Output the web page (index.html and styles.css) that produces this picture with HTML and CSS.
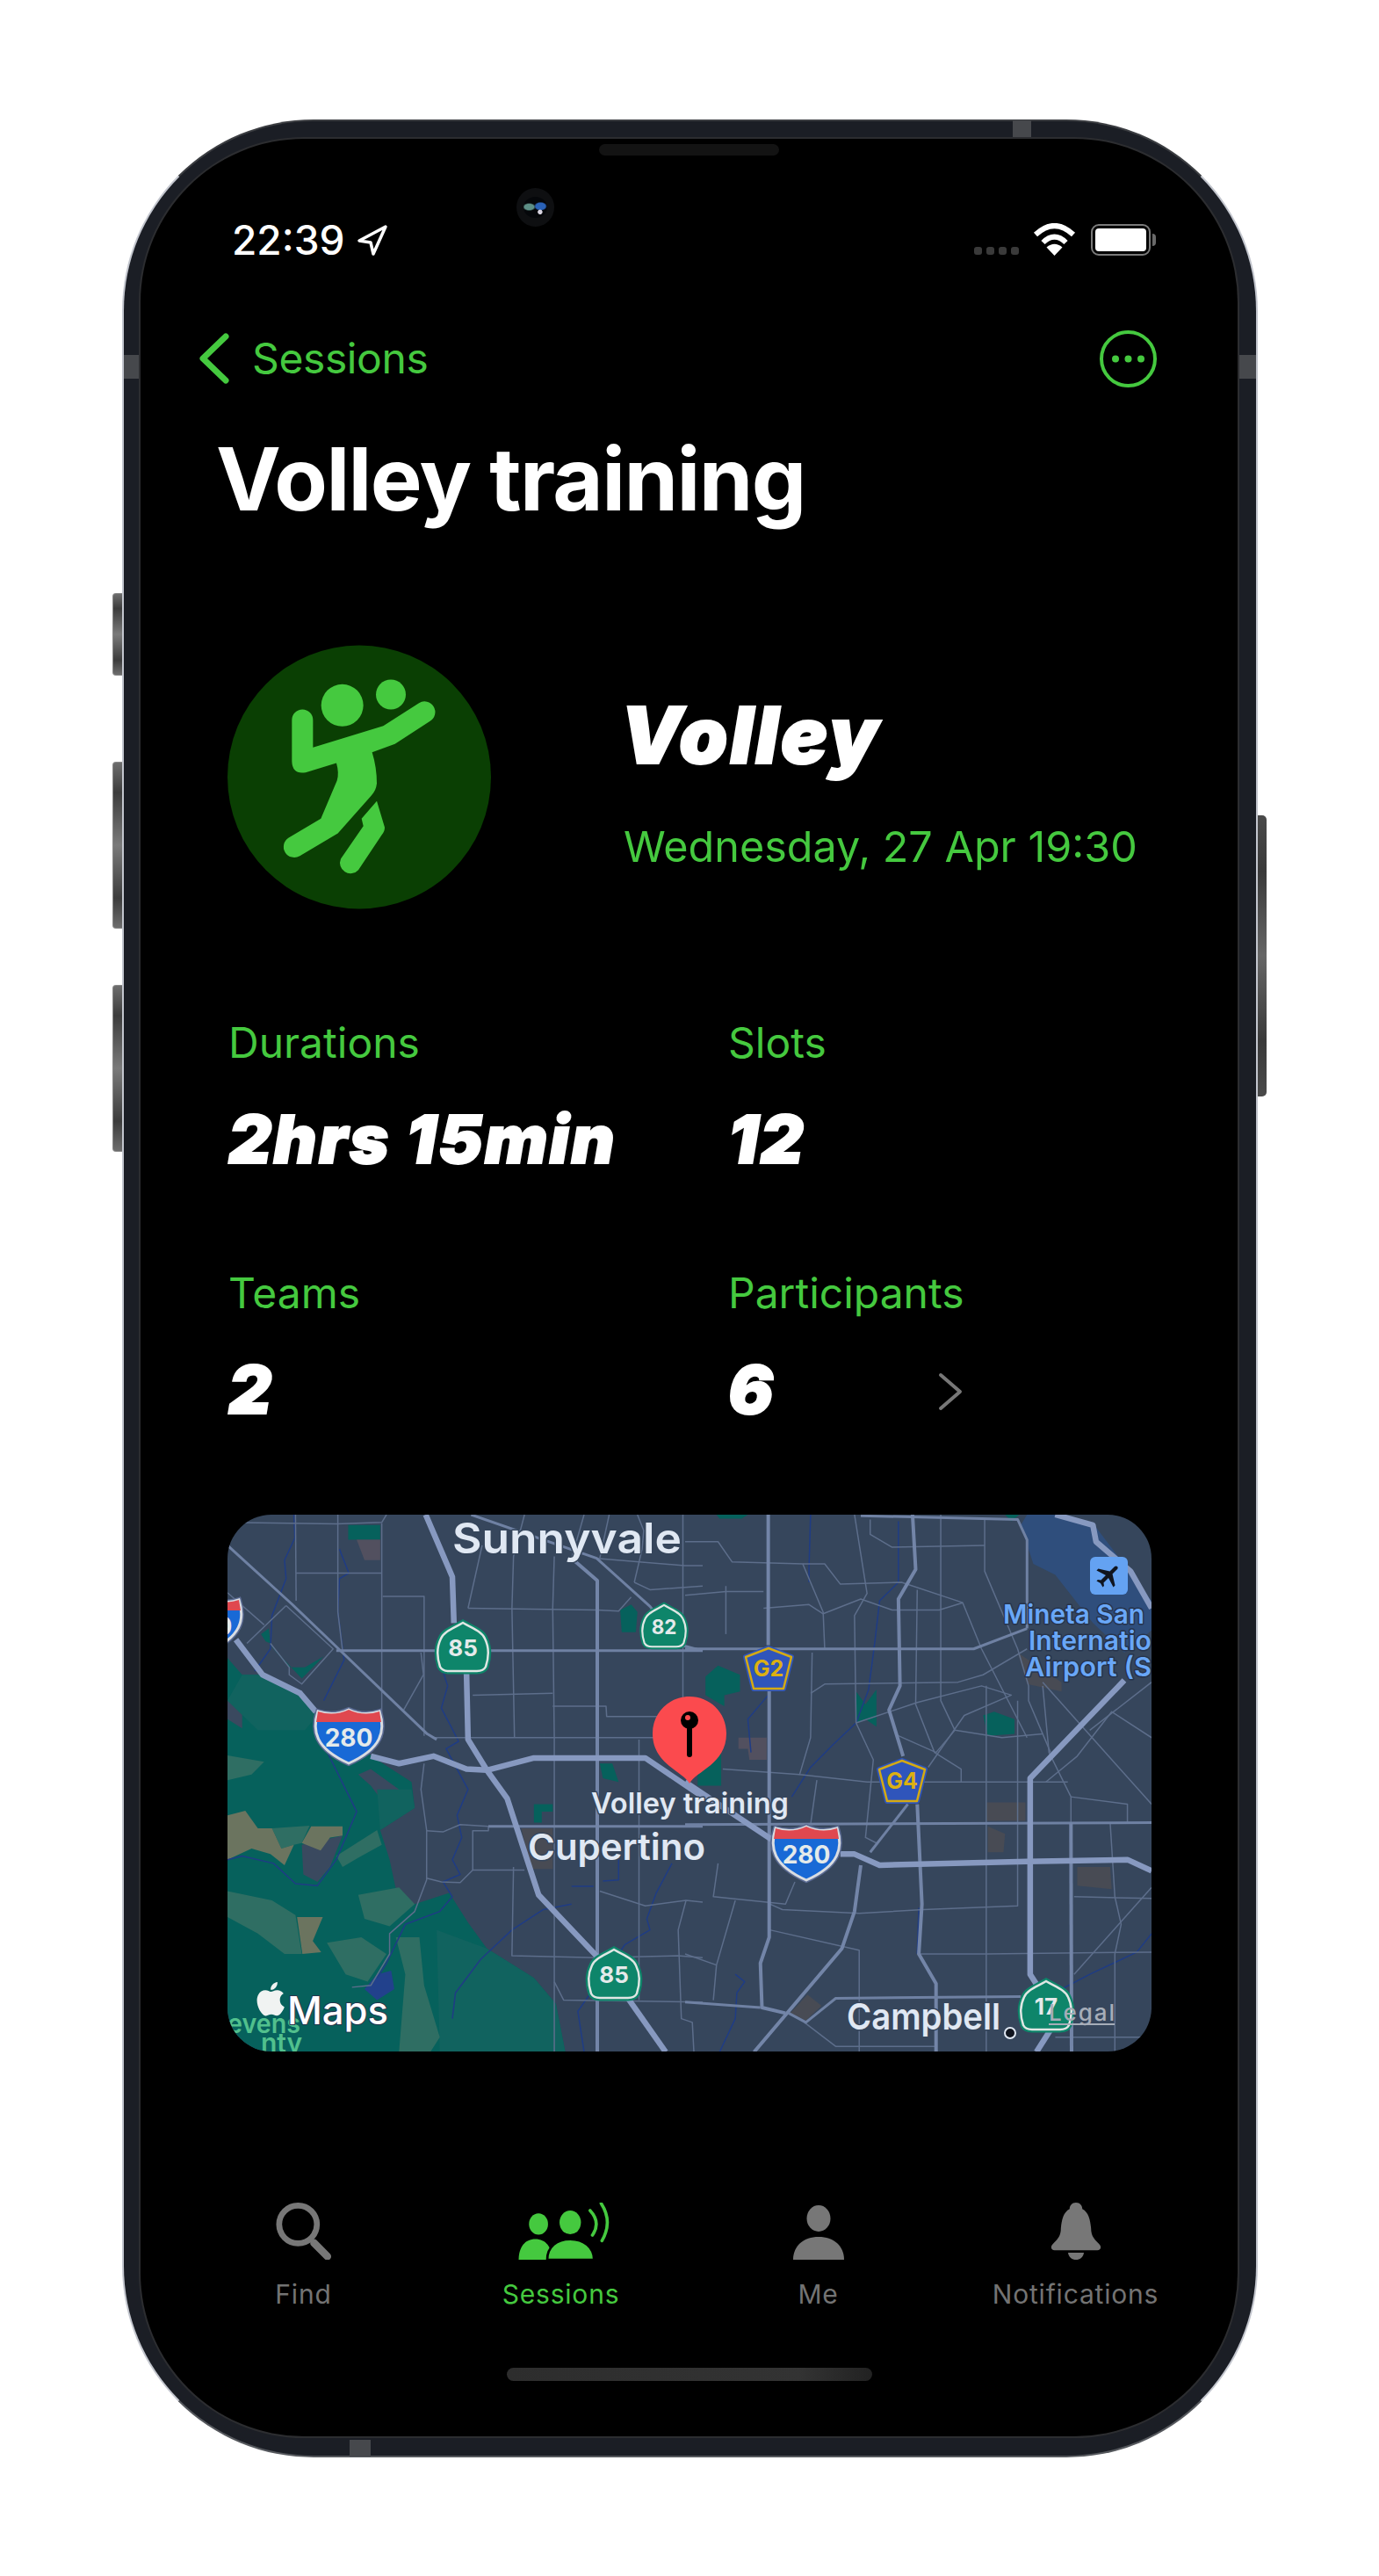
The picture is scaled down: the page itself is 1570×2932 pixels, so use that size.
FILE: index.html
```html
<!DOCTYPE html>
<html lang="en">
<head>
  <meta charset="UTF-8">
  <meta name="viewport" content="width=device-width, initial-scale=1.0">
  <title>Volley training</title>
  <link rel="stylesheet" href="styles.css">
</head>
<body>
  <div class="device">
    <span class="side-btn btn-silent"></span>
    <span class="side-btn btn-up"></span>
    <span class="side-btn btn-down"></span>
    <span class="side-btn btn-power"></span>
    <span class="band band-top"></span>
    <span class="band band-left"></span>
    <span class="band band-right"></span>
    <span class="band band-bottom"></span>

    <div class="screen">
      <span class="speaker"></span>
      <span class="camera"><span class="lens"></span></span>

      <div class="status-bar">
        <div class="status-left">
          <span class="time">22:39</span>
          <svg class="loc-arrow" viewBox="0 0 36 37"><path d="M33 3 L3 19 L16 21 L19 34 Z"/></svg>
        </div>
        <div class="status-right">
          <span class="signal"><i></i><i></i><i></i><i></i></span>
          <svg class="wifi" viewBox="0 0 49 37">
            <path d="M3 13 Q24.500 -7 46 13" />
            <path d="M11.500 22 Q24.500 9 37.500 22" />
            <path class="wifi-tip" d="M24.500 37 L15.500 27.500 Q24.500 20 33.500 27.500 Z"/>
          </svg>
          <span class="battery"><span class="battery-fill"></span></span>
          <span class="battery-nib"></span>
        </div>
      </div>

      <div class="nav">
        <a class="back">
          <svg class="chevron" viewBox="0 0 34 58"><path d="M30 4 L4 29 L30 54"/></svg>
          <span>Sessions</span>
        </a>
        <svg class="more" viewBox="0 0 65 65">
          <circle class="more-ring" cx="32.500" cy="32.500" r="30.500"/>
          <circle cx="18" cy="32.500" r="4"/><circle cx="32.500" cy="32.500" r="4"/><circle cx="47" cy="32.500" r="4"/>
        </svg>
      </div>

      <h1 class="title">Volley training</h1>

      <div class="hero">
        <svg class="sport-icon" viewBox="118 102 900 902">
          <circle class="sport-bg" cx="568" cy="553" r="450"/>
          <circle cx="510" cy="308" r="72"/>
          <circle cx="676" cy="271" r="51"/>
          <path d="M338 358 a36 36 0 0 1 72 0 L410 452 L650 378 L772 300 a36 36 0 0 1 38 62 L690 440 L612 468 Q628 520 628 575 Q625 600 610 615 L495 745 L365 822 a36 36 0 0 1 -38 -62 L437 695 L492 565 Q500 540 490 505 L385 537 Q340 545 338 500 Z"/>
          <path d="M628 635 L655 725 Q655 740 645 750 L565 870 a36 36 0 0 1 -60 -38 L582 720 L576 695 Z"/>
        </svg>
        <div class="hero-text">
          <div class="sport-name">Volley</div>
          <div class="session-date">Wednesday, 27 Apr 19:30</div>
        </div>
      </div>

      <div class="stats">
        <div class="stat">
          <div class="stat-label">Durations</div>
          <div class="stat-value">2hrs 15min</div>
        </div>
        <div class="stat">
          <div class="stat-label">Slots</div>
          <div class="stat-value">12</div>
        </div>
        <div class="stat">
          <div class="stat-label">Teams</div>
          <div class="stat-value">2</div>
        </div>
        <div class="stat">
          <div class="stat-label">Participants</div>
          <div class="stat-row">
            <div class="stat-value">6</div>
            <svg class="disclosure" viewBox="0 0 28 44"><path d="M3 3 L25 22 L3 41"/></svg>
          </div>
        </div>
      </div>

      <div class="map">
        <svg class="map-svg" viewBox="0 0 1052 611">
          <defs>
            <path id="ca-shield" d="M0 -28 C10 -22 22 -18 25 -10 C30 0 30 10 26 22 C24 26 20 27 16 27 L-16 27 C-20 27 -24 26 -26 22 C-30 10 -30 0 -25 -10 C-22 -18 -10 -22 0 -28 Z"/>
            <path id="us-shield" d="M-35 -28 Q-17 -22 0 -30 Q17 -22 35 -28 C42 -6 38 14 0 31 C-38 14 -42 -6 -35 -28 Z"/>
            <path id="us-band" d="M-35 -28 Q-17 -22 0 -30 Q17 -22 35 -28 L37 -16 L-37 -16 Z"/>
            <path id="county" d="M0 -23 L26 -13 L17 23 L-17 23 L-26 -13 Z"/>
          </defs>

          <!-- land patches, left half, traced in crop coords -->
          <g transform="translate(-19 -24) scale(0.35714 0.42088)">
            <path class="green" d="M53 445 L100 490 L170 490 L290 535 L340 600 L530 720 L640 780 L650 850 L540 910 L570 990 L590 1070 L650 1110 L760 1080 L820 1160 L880 1230 L1030 1310 L1100 1380 L1130 1510 L53 1510 Z"/>
            <path class="land" d="M53 560 L100 545 L100 635 L53 610 Z M105 570 L185 545 L240 570 L180 610 L130 600 Z M470 760 L510 745 L600 800 L545 830 L510 790 Z M290 950 L420 925 L380 1010 L340 1050 L295 1030 Z"/>
            <path class="green-dim" d="M100 490 L170 490 L290 535 L340 600 L300 640 L150 640 L53 560 Z M530 800 L640 800 L650 850 L540 910 Z M720 1180 L880 1230 L1030 1310 L1100 1380 L1130 1510 L730 1510 Z"/>
            <path class="green-light" d="M53 1075 L195 1100 L270 1140 L290 1245 L235 1245 L150 1190 L53 1145 Z M53 708 L170 725 L130 760 L53 775 Z M470 1085 L600 1065 L650 1110 L570 1170 L490 1150 Z M370 1215 L480 1200 L560 1245 L500 1320 L430 1300 Z M590 1200 L665 1200 L680 1330 L730 1470 L700 1510 L600 1510 L620 1300 Z M195 905 L315 898 L290 945 L265 950 L225 960 Z M400 980 L530 910 L545 950 L470 985 L420 1010 Z"/>
            <path class="tan" d="M53 870 L110 858 L150 905 L195 905 L225 960 L265 950 L235 1005 L190 975 L130 960 L53 990 Z M290 945 L320 900 L420 900 L420 925 L380 930 L350 965 Z M275 1145 L357 1145 L325 1210 L352 1240 L292 1245 Z"/>
            <path class="green" d="M185 405 L290 500 L360 440 L300 470 L250 470 Z M438 85 L540 85 L540 125 L465 125 L438 125 Z M1305 315 L1340 300 L1360 320 L1355 375 L1310 375 Z M1240 730 L1280 730 L1300 780 L1250 770 Z M1030 840 L1090 840 L1090 860 L1055 860 L1055 890 L1030 890 Z M160 380 L185 365 L190 405 L175 400 Z"/>
            <path class="maroon" d="M465 125 L540 125 L540 180 L490 180 Z"/>
            <path class="brown" d="M990 905 L1090 905 L1090 1015 L1020 1015 Z"/>
            <path class="reservoir" d="M530 1300 L575 1290 L585 1340 L530 1370 L490 1340 Z"/>

            <polyline class="water" points="265,57 268,120 235,180 240,230 195,330 190,420 140,480"/>
            <polyline class="water" points="410,150 440,215 410,230 405,320 425,450 360,560"/>
            <polyline class="water" points="360,680 465,860 400,990 340,1060 270,1055 200,1000 100,980 53,990"/>
            <polyline class="water" points="740,480 755,520 735,580 790,670 750,690 820,800 785,870 800,930 770,990 795,1030 740,1050 770,1090 730,1130 620,1165 560,1270 530,1310"/>
            <polyline class="water" points="1150,1062 1220,1062"/>
            <polyline class="water" points="1250,1048 1300,1045 1300,985"/>
            <polyline class="water" points="1470,1000 1420,1080 1390,1150 1400,1180 1320,1220 1170,1400 1190,1510"/>
            <polyline class="water" points="770,1420 780,1350 860,1260 960,1180 1060,1125 1150,1110"/>

            <polyline class="minor" points="53,78 400,82 545,78 560,57"/>
            <polyline class="minor" points="270,57 272,290"/>
            <polyline class="minor" points="405,57 405,320 420,425"/>
            <polyline class="minor" points="545,80 545,660"/>
            <polyline class="minor" points="272,215 405,215 545,215"/>
            <polyline class="minor" points="548,278 680,278 680,655"/>
            <polyline class="minor" points="670,430 678,490 615,585"/>
            <polyline class="minor" points="240,303 115,405"/>
            <polyline class="minor" points="240,303 390,420 290,515 250,490 250,470 190,405"/>
            <polyline class="minor" points="53,268 170,355"/>
            <polyline class="minor" points="835,545 1090,540"/>
            <polyline class="minor" points="820,310 1232,315 1300,318 1340,280"/>
            <polyline class="minor" points="1000,57 965,170 960,310 968,660"/>
            <polyline class="minor" points="1190,57 1150,175"/>
            <polyline class="minor" points="1270,57 1240,175"/>
            <polyline class="minor" points="1095,170 1090,310 1095,660 1095,1510"/>
            <polyline class="minor" points="820,310 865,140"/>
            <polyline class="minor" points="1090,575 1260,575 1262,603 1568,603"/>
            <polyline class="minor" points="705,660 1568,660"/>
            <polyline class="minor" points="680,730 670,800 688,910 688,1045 650,1130 570,1190 570,1245 510,1330 450,1335"/>
            <polyline class="minor" points="688,912 740,915 795,895 885,900 885,912 835,912 835,1018 1000,1018"/>
            <polyline class="minor" points="688,1040 735,1050 795,1052 835,1018"/>
            <polyline class="minor" points="965,1010 960,1250 1230,1255 1490,1250 1568,1255"/>
            <polyline class="minor" points="1240,1075 1385,1115 1515,1100 1568,1105"/>
            <polyline class="minor" points="1365,665 1365,1370"/>
            <polyline class="minor" points="1515,1100 1490,1180 1500,1420 1535,1430 1540,1510"/>
            <polyline class="minor" points="1095,1320 1125,1370 1568,1375"/>
            <polyline class="minor" points="1350,240 1400,260 1568,250"/>
            <polyline class="minor" points="1350,240 1375,150 1380,100 1360,57"/>
            <polyline class="minor" points="1505,57 1505,660"/>
            <polyline class="minor" points="1230,175 1510,195 1568,195"/>
            <polyline class="medium" points="53,140 260,300 690,650 720,665"/>
            <polyline class="medium" points="400,425 1568,425"/>
            <polyline class="medium" points="885,900 1568,900"/>
            <polyline class="medium" points="830,57 1230,175 1400,305 1500,410 1568,425"/>
            <polyline class="medium wide" points="1150,175 1232,235 1232,1510"/>
            <polyline class="major" points="80,395 165,490 285,540 335,590"/>
            <polyline class="major" points="510,710 600,730 710,710 815,745 880,748 1030,715 1385,715 1568,820"/>
            <polyline class="major" points="685,57 770,225 775,350"/>
            <polyline class="major" points="815,480 820,665 880,748 945,825 1045,1085 1235,1255"/>
            <polyline class="major" points="1330,1365 1450,1510"/>
          </g>

          <!-- land patches, right half -->
          <g transform="translate(521 -24) scale(0.35714 0.42088)">
            <path class="airport" d="M1070 85 L1090 57 L1200 57 L1300 80 L1487 290 L1487 370 L1400 430 L1300 350 L1180 220 L1110 190 Z"/>
            <path class="green" d="M65 495 L105 465 L175 490 L175 535 L125 545 L125 575 L65 545 Z M545 535 L575 570 L610 530 L610 630 L575 610 L545 620 Z M950 600 L985 590 L1050 610 L1050 650 L965 655 Z M40 700 L115 700 L115 790 L40 790 Z M100 57 L200 57 L180 68 L110 68 Z M1020 57 L1065 57 L1040 75 Z"/>
            <path class="maroon" d="M170 660 L260 660 L260 720 L205 720 L200 690 L170 690 Z"/>
            <path class="brown" d="M960 835 L1085 835 L1085 885 L960 885 Z M965 900 L1020 920 L1015 970 L965 970 Z M1250 1010 L1355 1010 L1360 1070 L1250 1060 Z M335 1405 L390 1355 L435 1385 L385 1425 Z M1060 430 L1200 510 L1200 535 L1090 515 Z"/>

            <polyline class="water" points="400,57 395,200 395,240"/>
            <polyline class="water" points="680,75 680,240 620,290 605,400 585,530 545,620 470,680 400,740 340,820"/>
            <polyline class="water" points="210,700 200,610 265,545"/>
            <polyline class="water" points="745,1120 740,1245"/>
            <polyline class="water" points="160,1300 190,1320 165,1350 160,1420 110,1510"/>
            <polyline class="water" points="1200,1340 1290,1300 1440,1240 1487,1190"/>

            <polyline class="minor" points="0,130 105,130 150,185 375,190 440,320 445,420"/>
            <polyline class="minor" points="375,190 445,190 495,245 690,240 885,295 945,420 1090,660"/>
            <polyline class="minor" points="0,275 130,265 250,265"/>
            <polyline class="minor" points="130,250 130,380"/>
            <polyline class="minor" points="250,310 395,300 440,325 560,285 660,315 810,315 885,295"/>
            <polyline class="minor" points="540,57 580,270 540,330 545,620 600,720 575,930 610,945"/>
            <polyline class="minor" points="590,70 590,110 660,145 955,140"/>
            <polyline class="minor" points="815,57 815,560 860,640 1010,660 1140,650"/>
            <polyline class="minor" points="955,70 955,210 1060,420 1095,520 1095,560 1165,700"/>
            <polyline class="minor" points="740,260 735,570 795,700 880,745 880,780"/>
            <polyline class="minor" points="405,430 400,660 365,760 580,780 880,780 1220,780"/>
            <polyline class="minor" points="400,540 445,515 870,510 950,490 1090,420"/>
            <polyline class="minor" points="120,745 365,760"/>
            <polyline class="minor" points="420,775 400,895"/>
            <polyline class="minor" points="545,620 740,565 945,520 1040,545 890,600 775,740"/>
            <polyline class="minor" points="860,640 800,700 680,655"/>
            <polyline class="minor" points="960,520 960,1510"/>
            <polyline class="minor" points="1060,560 1060,1115 760,1125 555,1135 310,1125 270,1110"/>
            <polyline class="minor" points="105,1000 90,1090 320,1110 350,1050"/>
            <polyline class="minor" points="1140,520 1160,700 1230,820 1230,890"/>
            <polyline class="minor" points="1230,820 1410,840 1410,890"/>
            <polyline class="minor" points="1487,660 1360,590 1250,710 1150,780"/>
            <polyline class="minor" points="1140,510 1487,840"/>
            <polyline class="minor" points="1290,640 1487,510"/>
            <polyline class="minor" points="160,1100 100,1275 90,1370"/>
            <polyline class="minor" points="0,1245 100,1275"/>
            <polyline class="minor" points="270,1180 555,1235 555,1510"/>
            <polyline class="minor" points="745,1245 960,1245"/>
            <polyline class="minor" points="960,1245 1487,1240"/>
            <polyline class="minor" points="1240,1090 1487,1095"/>
            <polyline class="minor" points="1355,890 1370,1090 1390,1165 1370,1245 1370,1510"/>
            <polyline class="minor" points="1240,1300 1487,1065"/>
            <polyline class="minor" points="380,1430 480,1495 800,1495"/>
            <polyline class="minor" points="1180,1470 1487,1470"/>
            <polyline class="medium" points="0,420 920,420 1090,365"/>
            <polyline class="medium" points="560,60 1060,70 1090,125 1090,365"/>
            <polyline class="medium" points="0,895 1487,890"/>
            <polyline class="medium wide" points="1230,890 1232,1510"/>
            <polyline class="medium" points="590,970 710,840"/>
            <polyline class="medium wide" points="725,57 735,205 680,285 685,520 650,585 695,710"/>
            <polyline class="medium wide" points="740,840 755,1110 745,1245 800,1325 800,1510"/>
            <polyline class="medium wide" points="265,57 265,410"/>
            <polyline class="medium wide" points="268,530 268,1200 240,1270 245,1390 320,1405"/>
            <polyline class="medium wide" points="560,1005 540,1130 500,1230 330,1400 220,1510"/>
            <polyline class="medium" points="0,1375 240,1390"/>
            <polyline class="medium" points="330,1405 385,1430 480,1365 1070,1360"/>
            <polyline class="major" points="0,780 275,935"/>
            <polyline class="major" points="495,975 540,975 620,1005 1090,995 1410,990 1487,1020"/>
            <polyline class="major" points="1400,505 1100,770 1100,1300 1130,1340"/>
            <polyline class="major" points="1165,1450 1120,1510"/>
            <polyline class="major" points="1180,57 1300,85 1310,130 1420,210 1487,310"/>
          </g>

          <text class="map-label" x="256" y="44" textLength="261" lengthAdjust="spacingAndGlyphs">Sunnyvale</text>
          <text class="map-label map-small" x="414" y="340" textLength="225" lengthAdjust="spacingAndGlyphs">Volley training</text>
          <text class="map-label map-mid" x="342" y="393" textLength="202" lengthAdjust="spacingAndGlyphs">Cupertino</text>
          <text class="map-label map-mid" x="705" y="586" textLength="175" lengthAdjust="spacingAndGlyphs">Campbell</text>
          <text class="airport-label" x="883" y="124" textLength="161" lengthAdjust="spacingAndGlyphs">Mineta San</text>
          <text class="airport-label" x="912" y="154" textLength="140" lengthAdjust="spacingAndGlyphs">Internatio</text>
          <text class="airport-label" x="908" y="184" textLength="144" lengthAdjust="spacingAndGlyphs">Airport (S</text>
          <text class="park-label" x="0" y="590" textLength="83" lengthAdjust="spacingAndGlyphs">evens</text>
          <text class="park-label" x="38" y="612">nty</text>

          <g transform="translate(268 151)">
            <use class="shield-back" href="#ca-shield"/><use class="shield-out" href="#ca-shield"/><text class="shield-num" y="10">85</text>
          </g>
          <g transform="translate(497 127) scale(0.86)">
            <use class="shield-back" href="#ca-shield"/><use class="shield-out" href="#ca-shield"/><text class="shield-num" y="10">82</text>
          </g>
          <g transform="translate(440 523)">
            <use class="shield-back" href="#ca-shield"/><use class="shield-out" href="#ca-shield"/><text class="shield-num" y="10">85</text>
          </g>
          <g transform="translate(932 559)">
            <use class="shield-back" href="#ca-shield"/><use class="shield-out" href="#ca-shield"/><text class="shield-num" y="10">17</text>
          </g>
          <g transform="translate(-22 125)">
            <use class="us-back" href="#us-shield"/><use class="us-out" href="#us-shield"/><use class="us-band" href="#us-band"/><text class="shield-num us-num" y="12">280</text>
          </g>
          <g transform="translate(138 252)">
            <use class="us-back" href="#us-shield"/><use class="us-out" href="#us-shield"/><use class="us-band" href="#us-band"/><text class="shield-num us-num" y="12">280</text>
          </g>
          <g transform="translate(659 385)">
            <use class="us-back" href="#us-shield"/><use class="us-out" href="#us-shield"/><use class="us-band" href="#us-band"/><text class="shield-num us-num" y="12">280</text>
          </g>
          <g transform="translate(616 175)">
            <use class="county-out" href="#county"/><use class="county-in" href="#county"/><text class="shield-num county-num" y="9">G2</text>
          </g>
          <g transform="translate(768 303)">
            <use class="county-out" href="#county"/><use class="county-in" href="#county"/><text class="shield-num county-num" y="9">G4</text>
          </g>

          <rect class="plane-tile" x="982" y="48" width="43" height="43" rx="6"/>
          <path class="plane" transform="translate(986.500 52.500) rotate(45 17 17) scale(1.42)" d="M21 16v-2l-8-5V3.500c0-.83-.67-1.500-1.500-1.500S10 2.670 10 3.500V9l-8 5v2l8-2.500V19l-2 1.500V22l3.500-1 3.500 1v-1.500L13 19v-5.500l8 2.500z"/>

          <path class="pin" d="M526 306 C519 292 484 284 484 249 C484 225 503 207 526 207 C549 207 568 225 568 249 C568 284 533 292 526 306 Z"/>
          <line class="pin-stick" x1="526" y1="236" x2="526" y2="273"/>
          <circle cx="526" cy="234" r="10"/>
          <circle class="pin-spot" cx="524" cy="231" r="3"/>

          <circle class="poi-dot" cx="891" cy="590" r="6"/>

          <path class="apple" transform="translate(30 532) scale(1.6)" d="M12.152 6.896c-.948 0-2.415-1.078-3.960-1.040-2.040.027-3.910 1.183-4.961 3.014-2.117 3.675-.546 9.103 1.519 12.090 1.013 1.454 2.208 3.090 3.792 3.039 1.520-.065 2.090-.987 3.935-.987 1.831 0 2.350.987 3.960.948 1.637-.026 2.676-1.480 3.676-2.948 1.156-1.688 1.636-3.325 1.662-3.415-.039-.013-3.182-1.221-3.220-4.857-.026-3.040 2.480-4.494 2.597-4.559-1.429-2.090-3.623-2.324-4.390-2.376-2-.156-3.675 1.090-4.610 1.090zM15.530 3.830c.843-1.012 1.400-2.427 1.245-3.830-1.207.052-2.662.805-3.532 1.818-.780.896-1.454 2.338-1.273 3.714 1.338.104 2.715-.688 3.559-1.701"/>
          <text class="maps-word" x="68" y="580" textLength="115" lengthAdjust="spacingAndGlyphs">Maps</text>
          <text class="legal" x="935" y="576" textLength="75">Legal</text>
          <line class="legal-line" x1="935" y1="580" x2="1010" y2="580"/>
        </svg>
      </div>

      <div class="tabs">
        <div class="tab">
          <svg class="tab-icon icon-find" viewBox="0 0 66 68">
            <circle cx="26" cy="26" r="22.500"/>
            <path class="find-handle" d="M45 48 L61 64"/>
          </svg>
          <span>Find</span>
        </div>
        <div class="tab tab-active">
          <svg class="tab-icon icon-sessions" viewBox="0 0 114 72">
            <ellipse cx="25" cy="27" rx="12" ry="13.500"/>
            <path d="M0 72 C0 56 8 46 21 46 C34 46 42 56 42 72 Z"/>
            <ellipse cx="65" cy="25" rx="13.500" ry="15"/>
            <path class="body-front" d="M36 72 C36 56 48 46 65 46 C82 46 95 56 95 72 Z"/>
            <path class="wave" d="M90 10 Q104 25 93 41"/>
            <path class="wave" d="M104 1 Q119 24 105 48"/>
          </svg>
          <span>Sessions</span>
        </div>
        <div class="tab">
          <svg class="tab-icon icon-me" viewBox="0 0 58 62">
            <ellipse cx="29" cy="15" rx="13.500" ry="15"/>
            <path d="M0 62 C0 46 12 36 29 36 C46 36 58 46 58 62 Z"/>
          </svg>
          <span>Me</span>
        </div>
        <div class="tab">
          <svg class="tab-icon icon-bell" viewBox="0 0 64 72">
            <path d="M32 0 C37 0 40 4 40 8 C48 12 50 22 51 32 C51 42 55 46 61 52 C65 56 63 60 59 60 L5 60 C1 60 -1 56 3 52 C9 46 13 42 13 32 C14 22 16 12 24 8 C24 4 27 0 32 0 Z"/>
            <path d="M22 63 L42 63 C41 69 37 72 32 72 C27 72 23 69 22 63 Z"/>
          </svg>
          <span>Notifications</span>
        </div>
      </div>

      <div class="home-bar"></div>
    </div>
  </div>
</body>
</html>
```

FILE: styles.css
```css
* {
  box-sizing: border-box;
}
body {
  margin: 0;
  padding: 136px 0 0 139px;
  background: #fff;
  font-family: Inter, "Liberation Sans", sans-serif;
  color: #fff;
}

/* phone frame */
.device {
  position: relative;
  width: 1293px;
  height: 2661px;
  padding: 20px 21px 22px 19px;
  background: #1b1e25;
  border: 2px solid;
  border-color: #3b3d41 #c3c6ce #55585d #c3c6ce;
  border-radius: 218px;
}
.screen {
  position: relative;
  height: 100%;
  background: #000;
  border-radius: 186px;
  box-shadow: 0 0 0 2px #2c2d30;
  overflow: hidden;
}
.side-btn {
  position: absolute;
  width: 11px;
  background: linear-gradient(#6d6d6d, #3c3c3c 18%, #7a7a7a 50%, #3c3c3c 82%, #6d6d6d);
  border: 1px solid #8a8a8a;
  border-right: 0;
  border-radius: 4px 0 0 4px;
}
.btn-silent {
  left: -13px;
  top: 537px;
  height: 94px;
}
.btn-up {
  left: -13px;
  top: 729px;
  height: 190px;
}
.btn-down {
  left: -13px;
  top: 983px;
  height: 190px;
}
.btn-power {
  left: auto;
  right: -12px;
  top: 790px;
  width: 10px;
  height: 320px;
  border: 0;
  border-radius: 0 5px 5px 0;
  background: linear-gradient(#4a4a4a, #3a3a3a 20%, #666 50%, #3a3a3a 80%, #4a4a4a);
}
.band {
  position: absolute;
  background: #46484c;
}
.band-top {
  left: 1012px;
  top: -1px;
  width: 21px;
  height: 21px;
}
.band-bottom {
  left: 257px;
  bottom: -1px;
  width: 24px;
  height: 19px;
}
.band-left {
  left: 0;
  top: 266px;
  width: 19px;
  height: 27px;
}
.band-right {
  right: 0;
  top: 266px;
  width: 21px;
  height: 27px;
}
.speaker {
  position: absolute;
  left: 522px;
  top: 6px;
  width: 205px;
  height: 13px;
  background: #131313;
  border-radius: 7px;
}
.camera {
  position: absolute;
  left: 428px;
  top: 56px;
  width: 43px;
  height: 44px;
  padding: 10px 8px;
  background: #0e0f11;
  border-radius: 50%;
}
.lens {
  display: block;
  width: 27px;
  height: 24px;
  border-radius: 50%;
  background:
    radial-gradient(circle at 70% 72%, #d8d4e0 0 9%, transparent 12%),
    radial-gradient(ellipse at 72% 45%, #2a62b8 0 20%, transparent 27%),
    radial-gradient(ellipse at 24% 48%, #5d8f86 0 18%, transparent 26%),
    #05070a;
}

/* status bar */
.status-bar {
  height: 219px;
  padding: 85px 93px 0 104px;
  display: flex;
  justify-content: space-between;
}
.status-left {
  display: flex;
  align-items: center;
  gap: 14px;
  height: 60px;
}
.time {
  font-size: 46px;
  font-weight: 500;
  line-height: 60px;
}
.loc-arrow {
  width: 36px;
  height: 37px;
  fill: none;
  stroke: #fff;
  stroke-width: 3.500;
  stroke-linejoin: round;
}
.status-right {
  position: relative;
  display: flex;
  align-items: flex-end;
  height: 37px;
  margin-top: 11px;
}
.signal {
  display: flex;
  gap: 5px;
  margin-right: 16px;
  margin-bottom: 1px;
}
.signal i {
  width: 9px;
  height: 9px;
  background: #3a3a3a;
  border-radius: 3px;
}
.wifi {
  width: 49px;
  height: 37px;
  margin-right: 17px;
  fill: none;
  stroke: #fff;
  stroke-width: 6;
}
.wifi-tip {
  fill: #fff;
  stroke: none;
}
.battery {
  width: 68px;
  height: 36px;
  padding: 3px;
  border: 2px solid #7a7a7a;
  border-radius: 9px;
}
.battery-fill {
  display: block;
  height: 100%;
  background: #fff;
  border-radius: 4px;
}
.battery-nib {
  width: 4px;
  height: 14px;
  margin: 0 0 11px 2px;
  background: #6a6a6a;
  border-radius: 0 4px 4px 0;
}

/* nav row */
.nav {
  display: flex;
  align-items: center;
  justify-content: space-between;
  height: 62px;
  padding: 0 92px 0 67px;
  color: #45c93f;
}
.back {
  display: flex;
  align-items: center;
  gap: 26px;
  font-size: 48px;
  letter-spacing: -0.4px;
  line-height: 62px;
}
.chevron {
  width: 34px;
  height: 58px;
  fill: none;
  stroke: #45c93f;
  stroke-width: 7;
  stroke-linecap: round;
  stroke-linejoin: round;
}
.more {
  width: 65px;
  height: 65px;
  fill: #45c93f;
}
.more-ring {
  fill: none;
  stroke: #45c93f;
  stroke-width: 4;
}

.title {
  margin: 46px 0 0;
  padding-left: 86px;
  font-size: 99px;
  font-weight: 700;
  letter-spacing: -1.600px;
  line-height: 120px;
}

/* sport + date */
.hero {
  display: flex;
  align-items: center;
  gap: 151px;
  margin-top: 129px;
  padding-left: 99px;
}
.sport-icon {
  width: 300px;
  height: 301px;
  fill: #45c93f;
}
.sport-bg {
  fill: #0a3f03;
}
.hero-text {
  padding-top: 9px;
}
.sport-name {
  margin-left: -4px;
  font-size: 89px;
  font-weight: 900;
  font-style: italic;
  letter-spacing: 2.500px;
  line-height: 106px;
  -webkit-text-stroke: 2px #fff;
}
.session-date {
  margin-top: 44px;
  font-size: 48.500px;
  line-height: 60px;
  color: #45c93f;
}

/* stats */
.stats {
  display: grid;
  grid-template-columns: 569px 1fr;
  row-gap: 100px;
  margin-top: 122px;
  padding-left: 100px;
}
.stat-label {
  font-size: 48px;
  line-height: 60px;
  color: #45c93f;
}
.stat-value {
  margin-top: 33px;
  font-size: 76px;
  font-weight: 900;
  font-style: italic;
  letter-spacing: 2.200px;
  line-height: 92px;
  -webkit-text-stroke: 2px #fff;
}
.stat-row {
  display: flex;
  align-items: center;
  justify-content: space-between;
  width: 267px;
}
.disclosure {
  width: 28px;
  height: 44px;
  margin-top: 38px;
  fill: none;
  stroke: #777;
  stroke-width: 4;
  stroke-linecap: round;
  stroke-linejoin: round;
}

/* map */
.map {
  width: 1052px;
  height: 611px;
  margin: 97px 0 0 99px;
  background: #36465c;
  border-radius: 50px;
  overflow: hidden;
}
.map-svg {
  display: block;
  width: 100%;
  height: 100%;
}
.map-svg polyline {
  fill: none;
  stroke-linejoin: round;
  vector-effect: non-scaling-stroke;
}
.land {
  fill: #3a495f;
}
.green {
  fill: #06615c;
}
.green-dim {
  fill: #11635f;
}
.green-light {
  fill: #2f6e63;
}
.tan {
  fill: #6b745f;
}
.maroon {
  fill: #52505f;
}
.brown {
  fill: #484b54;
}
.reservoir {
  fill: #22418c;
}
.airport {
  fill: #2f4e7c;
}
.water {
  stroke: #1f3c85;
  stroke-width: 1.500;
}
.minor {
  stroke: #5d6e8b;
  stroke-width: 1.500;
}
.medium {
  stroke: #6f81a3;
  stroke-width: 3;
}
.medium.wide {
  stroke: #7385a8;
  stroke-width: 4;
}
.major {
  stroke: #8799c0;
  stroke-width: 6.500;
}
.map-svg text {
  font-family: Inter, "Liberation Sans", sans-serif;
  paint-order: stroke;
  stroke-linejoin: round;
}
.map-label {
  font-size: 48px;
  font-weight: 600;
  fill: #e0e8f3;
  stroke: #36465c;
  stroke-width: 3px;
}
.map-small {
  font-size: 32px;
}
.map-mid {
  font-size: 41px;
}
.airport-label {
  font-size: 30px;
  font-weight: 600;
  fill: #69a7f7;
  stroke: #26344c;
  stroke-width: 3px;
}
.park-label {
  font-size: 30px;
  font-weight: 600;
  fill: #51c08d;
}
.shield-back {
  fill: none;
  stroke: #0e856a;
  stroke-width: 7;
}
.shield-out {
  fill: #0e856a;
  stroke: #dfe7e4;
  stroke-width: 2.500;
}
.shield-num {
  font-size: 26px;
  font-weight: 700;
  fill: #e4eaea;
  text-anchor: middle;
}
.us-back {
  fill: none;
  stroke: #5a6a92;
  stroke-width: 6;
}
.us-out {
  fill: #1869d6;
  stroke: #d9dde2;
  stroke-width: 3;
}
.us-band {
  fill: #e0484f;
}
.us-num {
  font-size: 28px;
}
.county-out {
  fill: none;
  stroke: #2f55bb;
  stroke-width: 6;
  stroke-linejoin: round;
}
.county-in {
  fill: #2f55bb;
  stroke: #d5aa12;
  stroke-width: 2.500;
  stroke-linejoin: round;
}
.county-num {
  fill: #dcb012;
  font-size: 25px;
}
.plane-tile {
  fill: #64a2f2;
}
.plane {
  fill: #10151f;
}
.pin {
  fill: #fb4a4e;
}
.pin-stick {
  stroke: #000;
  stroke-width: 6;
  stroke-linecap: round;
}
.pin-spot {
  fill: #fb4a4e;
}
.poi-dot {
  fill: #10151f;
  stroke: #e0e8f3;
  stroke-width: 2;
}
.apple {
  fill: #f0f3f2;
}
.maps-word {
  font-size: 44px;
  font-weight: 500;
  fill: #fff;
  stroke: #26344c;
  stroke-width: 2px;
}
.legal {
  font-size: 26px;
  font-weight: 500;
  fill: #a6adb8;
}
.legal-line {
  stroke: #a6adb8;
  stroke-width: 2;
}

/* tab bar */
.tabs {
  display: grid;
  grid-template-columns: repeat(4, 293px);
  margin-top: 172px;
  padding-left: 39px;
}
.tab {
  display: flex;
  flex-direction: column;
  align-items: center;
  justify-content: flex-end;
  height: 122px;
  font-size: 30px;
  letter-spacing: 0.800px;
  line-height: 36px;
  color: #737373;
}
.tab-active {
  color: #45c93f;
}
.tab-icon {
  margin-bottom: 21px;
  fill: #777;
}
.icon-find {
  width: 66px;
  height: 68px;
  fill: none;
  stroke: #777;
  stroke-width: 7;
  stroke-linecap: round;
}
.find-handle {
  stroke-width: 9;
}
.icon-sessions {
  width: 114px;
  height: 72px;
  margin-left: 6px;
  fill: #45c93f;
}
.body-front {
  stroke: #000;
  stroke-width: 3;
}
.wave {
  fill: none;
  stroke: #45c93f;
  stroke-width: 4;
  stroke-linecap: round;
}
.icon-me {
  width: 58px;
  height: 62px;
}
.icon-bell {
  width: 64px;
  height: 72px;
}
.home-bar {
  width: 416px;
  height: 15px;
  margin: 66px 0 0 417px;
  background: linear-gradient(90deg, #2d2d2d, #333 80%, #222);
  border-radius: 8px;
}
```
